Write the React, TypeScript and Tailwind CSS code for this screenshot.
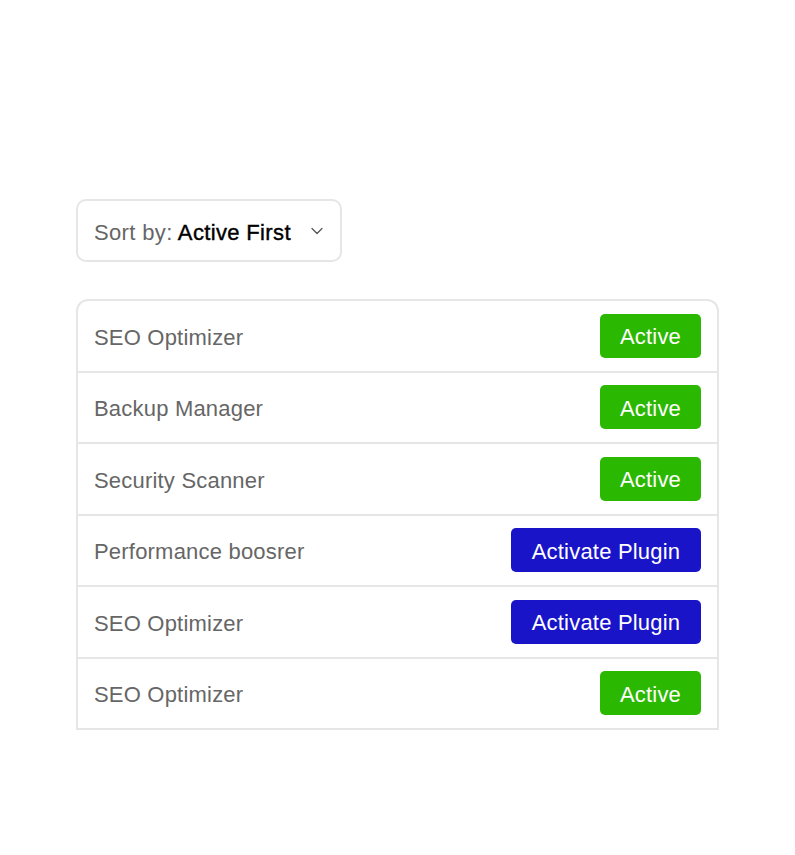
import { ChevronDown } from "lucide-react"

type Plugin = {
    name: string
    active: boolean
}

const plugins: Plugin[] = [
    { name: "SEO Optimizer", active: true },
    { name: "Backup Manager", active: true },
    { name: "Security Scanner", active: true },
    { name: "Performance boosrer", active: false },
    { name: "SEO Optimizer", active: false },
    { name: "SEO Optimizer", active: true },
]

export default function App() {
    return (
        <main className="min-h-screen bg-white pl-[76px] pr-[76px] pt-[199px] font-['Liberation_Sans',Arial,sans-serif] tracking-[0.2px]">
            {/* Sort select */}
            <button
                type="button"
                className="flex h-[63px] w-[266px] items-center justify-between rounded-[10px] border-2 border-[#e6e6e6] bg-white pl-[16px] pr-[13px] text-[22px]"
            >
                <span className="whitespace-nowrap pt-[3px] tracking-[0.35px]">
                    <span className="text-[#666666]">Sort by: </span>
                    <span className="text-black [-webkit-text-stroke:0.4px_black]">Active First</span>
                </span>
                <ChevronDown className="h-5 w-5 shrink-0 text-[#555555]" strokeWidth={1.5} />
            </button>

            {/* Plugin list */}
            <div className="mt-[37px] w-[643px] overflow-hidden rounded-t-[12px] border-2 border-b-0 border-[#e6e6e6]">
                {plugins.map((p, i) => (
                    <div
                        key={i}
                        className="flex h-[71.5px] items-center justify-between border-b-2 border-[#e6e6e6] pl-[16px] pr-[16px]"
                    >
                        <span className="pt-[3px] text-[22px] text-[#666666]">{p.name}</span>
                        {p.active ? (
                            <button
                                type="button"
                                className="flex h-[44px] w-[101px] items-center justify-center rounded-[5px] bg-[#2bb800] pt-[2px] text-[22px] text-white"
                            >
                                Active
                            </button>
                        ) : (
                            <button
                                type="button"
                                className="flex h-[44px] w-[190px] items-center justify-center rounded-[5px] bg-[#1a14c9] pt-[2px] text-[22px] text-white"
                            >
                                Activate Plugin
                            </button>
                        )}
                    </div>
                ))}
            </div>
        </main>
    )
}
